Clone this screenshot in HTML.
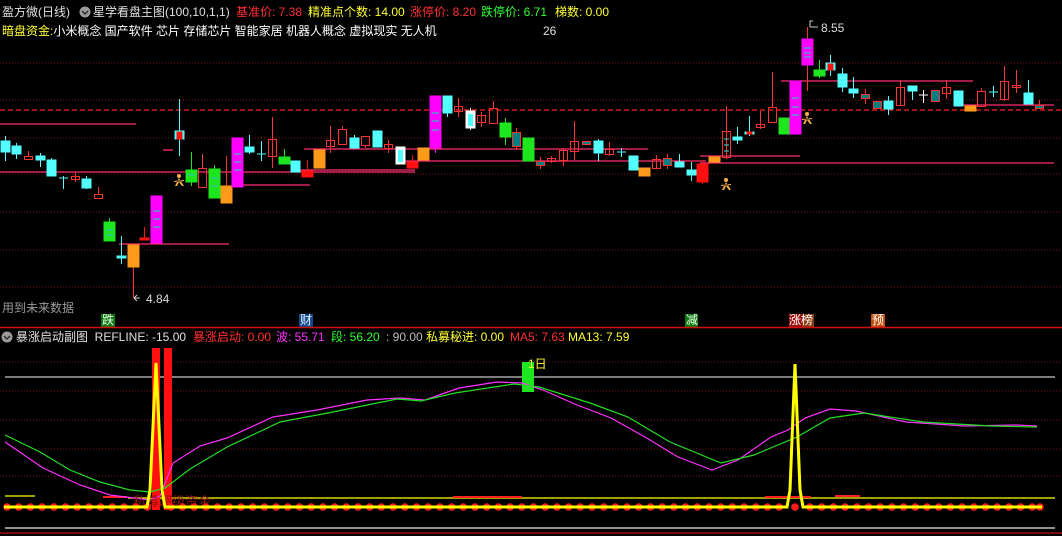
<!DOCTYPE html>
<html><head><meta charset="utf-8"><style>
body{margin:0;background:#000;width:1062px;height:536px;overflow:hidden;font-family:"Liberation Sans","Noto Sans CJK SC",sans-serif;}
svg{position:absolute;left:0;top:0}
.t{position:absolute;font-size:12px;white-space:nowrap;line-height:14px}
</style></head><body>
<svg width="1062" height="536" xmlns="http://www.w3.org/2000/svg">
<g stroke="#7a1010" stroke-width="1" stroke-dasharray="1,2">
<line x1="0" y1="63" x2="1062" y2="63"/><line x1="0" y1="100" x2="1062" y2="100"/><line x1="0" y1="138" x2="1062" y2="138"/><line x1="0" y1="174" x2="1062" y2="174"/><line x1="0" y1="212" x2="1062" y2="212"/><line x1="0" y1="250" x2="1062" y2="250"/><line x1="0" y1="287" x2="1062" y2="287"/>
<line x1="0" y1="362" x2="1062" y2="362"/><line x1="0" y1="391" x2="1062" y2="391"/><line x1="0" y1="420" x2="1062" y2="420"/><line x1="0" y1="449" x2="1062" y2="449"/><line x1="0" y1="476" x2="1062" y2="476"/>
</g>
<line x1="0" y1="110" x2="1062" y2="110" stroke="#ff2020" stroke-width="1.3" stroke-dasharray="5,3"/>
<g stroke="#ff3070" stroke-width="1.3">
<line x1="0" y1="124" x2="136" y2="124"/><line x1="0" y1="172" x2="415" y2="172"/><line x1="119" y1="244" x2="229" y2="244"/><line x1="243" y1="185" x2="310" y2="185"/><line x1="304" y1="149" x2="648" y2="149"/><line x1="293" y1="170" x2="415" y2="170"/><line x1="398" y1="161" x2="706" y2="161"/><line x1="700" y1="163" x2="1054" y2="163"/><line x1="700" y1="156" x2="800" y2="156"/><line x1="781" y1="81" x2="973" y2="81"/><line x1="957" y1="105" x2="1054" y2="105"/><line x1="163" y1="150" x2="173" y2="150"/>
</g>
<g stroke-width="1">
<g fill="#54ffff" stroke="#54ffff">
<line x1="5.5" y1="136" x2="5.5" y2="161"/><rect x="1" y="141" width="9" height="11"/>
<line x1="16.5" y1="143" x2="16.5" y2="159"/><rect x="12" y="146" width="9" height="8"/>
<line x1="40.5" y1="153" x2="40.5" y2="167"/><rect x="36" y="156" width="9" height="4"/>
<line x1="51.5" y1="158" x2="51.5" y2="176"/><rect x="47" y="160" width="9" height="16"/>
<line x1="63.5" y1="176" x2="63.5" y2="189"/><line x1="59" y1="178" x2="68" y2="178"/>
<line x1="86.5" y1="176" x2="86.5" y2="189"/><rect x="82" y="179" width="9" height="9"/>
<line x1="121.5" y1="236" x2="121.5" y2="264"/><rect x="117" y="256" width="9" height="2"/>
<line x1="179.5" y1="99" x2="179.5" y2="156"/><rect x="175" y="131" width="9" height="8"/>
<line x1="249.5" y1="135" x2="249.5" y2="154"/><rect x="245" y="147" width="9" height="5"/>
<line x1="261.5" y1="141" x2="261.5" y2="161"/><line x1="257" y1="154" x2="266" y2="154"/>
<rect x="291" y="161" width="9" height="11"/>
<line x1="354.5" y1="135" x2="354.5" y2="148"/><rect x="350" y="138" width="9" height="10"/>
<rect x="373" y="131" width="9" height="16"/>
<rect x="443" y="96" width="9" height="17"/><line x1="447.5" y1="113" x2="447.5" y2="117"/>
<line x1="598.5" y1="139" x2="598.5" y2="161"/><rect x="594" y="141" width="9" height="12"/>
<line x1="621.5" y1="148" x2="621.5" y2="157"/><line x1="617" y1="152" x2="626" y2="152"/>
<rect x="629" y="156" width="9" height="14"/>
<line x1="679.5" y1="154" x2="679.5" y2="167"/><rect x="675" y="162" width="9" height="5"/>
<line x1="691.5" y1="162" x2="691.5" y2="181"/><rect x="687" y="170" width="9" height="5"/>
<line x1="737.5" y1="127" x2="737.5" y2="144"/><rect x="733" y="137" width="9" height="3"/>
<line x1="749.5" y1="116" x2="749.5" y2="136"/><rect x="745" y="132" width="9" height="2"/>
<line x1="830.5" y1="55" x2="830.5" y2="76"/><rect x="826" y="63" width="9" height="7"/>
<line x1="842.5" y1="68" x2="842.5" y2="92"/><rect x="838" y="74" width="9" height="13"/>
<line x1="853.5" y1="77" x2="853.5" y2="98"/><rect x="849" y="89" width="9" height="4"/>
<line x1="888.5" y1="96" x2="888.5" y2="115"/><rect x="884" y="101" width="9" height="8"/>
<line x1="912.5" y1="86" x2="912.5" y2="100"/><rect x="908" y="86" width="9" height="5"/>
<rect x="954" y="91" width="9" height="15"/>
<line x1="993.5" y1="86" x2="993.5" y2="97"/><line x1="989" y1="92" x2="998" y2="92"/>
<line x1="1028.5" y1="80" x2="1028.5" y2="93"/><rect x="1024" y="93" width="9" height="11"/>
</g>
<g fill="#fff" stroke="#fff"><rect x="396" y="147" width="9" height="17"/><rect x="466" y="111" width="9" height="17"/><line x1="470.5" y1="108" x2="470.5" y2="130"/><line x1="923.5" y1="90" x2="923.5" y2="103"/><line x1="919" y1="95" x2="928" y2="95"/></g>
<g fill="#54ffff"><rect x="398" y="150" width="5" height="12"/><rect x="468" y="114" width="5" height="12"/></g>
<g fill="none" stroke="#ff3232">
<line x1="28.5" y1="151" x2="28.5" y2="156"/><rect x="24.5" y="156.5" width="8" height="3"/>
<line x1="75.5" y1="172" x2="75.5" y2="182"/><rect x="71.5" y="176.5" width="8" height="3"/>
<line x1="98.5" y1="187" x2="98.5" y2="194"/><rect x="94.5" y="194.5" width="8" height="4"/>
<line x1="202.5" y1="154" x2="202.5" y2="168"/><rect x="198.5" y="168.5" width="8" height="19"/>
<line x1="272.5" y1="117" x2="272.5" y2="168"/><rect x="268.5" y="139.5" width="8" height="17"/>
<line x1="330.5" y1="126" x2="330.5" y2="153"/><rect x="326.5" y="140.5" width="8" height="6"/>
<line x1="342.5" y1="126" x2="342.5" y2="129"/><rect x="338.5" y="129.5" width="8" height="15"/>
<rect x="361.5" y="136.5" width="8" height="9"/><line x1="365.5" y1="146" x2="365.5" y2="148"/>
<line x1="388.5" y1="140" x2="388.5" y2="153"/><rect x="384.5" y="144.5" width="8" height="4"/>
<line x1="458.5" y1="98" x2="458.5" y2="117"/><rect x="454.5" y="106.5" width="8" height="5"/>
<line x1="481.5" y1="112" x2="481.5" y2="127"/><rect x="477.5" y="115.5" width="8" height="7"/>
<line x1="493.5" y1="101" x2="493.5" y2="108"/><rect x="489.5" y="108.5" width="8" height="15"/>
<line x1="551.5" y1="156" x2="551.5" y2="163"/><rect x="547.5" y="158.5" width="8" height="3"/>
<line x1="563.5" y1="148" x2="563.5" y2="166"/><rect x="559.5" y="150.5" width="8" height="10"/>
<line x1="574.5" y1="121" x2="574.5" y2="160"/><rect x="570.5" y="141.5" width="8" height="10"/>
<line x1="609.5" y1="142" x2="609.5" y2="156"/><rect x="605.5" y="149.5" width="8" height="5"/>
<line x1="656.5" y1="155" x2="656.5" y2="168"/><rect x="652.5" y="159.5" width="8" height="9"/>
<line x1="726.5" y1="106" x2="726.5" y2="159"/><rect x="722.5" y="131.5" width="8" height="26"/>
<line x1="760.5" y1="111" x2="760.5" y2="129"/><rect x="756.5" y="124.5" width="8" height="3"/>
<line x1="772.5" y1="72" x2="772.5" y2="107"/><rect x="768.5" y="107.5" width="8" height="15"/>
<line x1="900.5" y1="80" x2="900.5" y2="106"/><rect x="896.5" y="87.5" width="8" height="18"/>
<line x1="946.5" y1="80" x2="946.5" y2="99"/><rect x="942.5" y="87.5" width="8" height="6"/>
<line x1="981.5" y1="88" x2="981.5" y2="91"/><rect x="977.5" y="91.5" width="8" height="15"/>
<line x1="1004.5" y1="66" x2="1004.5" y2="101"/><rect x="1000.5" y="81.5" width="8" height="18"/>
<line x1="1016.5" y1="70" x2="1016.5" y2="93"/><rect x="1012.5" y="85.5" width="8" height="2"/>
</g>
<g fill="#008080" stroke="#ff3232">
<line x1="516.5" y1="128" x2="516.5" y2="150"/><rect x="512.5" y="132.5" width="8" height="14"/>
<line x1="540.5" y1="157" x2="540.5" y2="169"/><rect x="536.5" y="161.5" width="8" height="4"/>
<rect x="582.5" y="141.5" width="8" height="3"/>
<line x1="667.5" y1="154" x2="667.5" y2="169"/><rect x="663.5" y="158.5" width="8" height="7"/>
<line x1="865.5" y1="89" x2="865.5" y2="104"/><rect x="861.5" y="94.5" width="8" height="4"/>
<rect x="873.5" y="101.5" width="8" height="7"/>
<rect x="931.5" y="90.5" width="8" height="11"/>
<line x1="1039.5" y1="100" x2="1039.5" y2="108"/><rect x="1035.5" y="105.5" width="8" height="3"/>
</g>
<g fill="#ff1010" stroke="#ff1010">
<line x1="144.5" y1="227" x2="144.5" y2="240"/><rect x="140" y="238" width="9" height="2"/>
<line x1="307.5" y1="160" x2="307.5" y2="177"/><rect x="302" y="171" width="11" height="6"/>
<line x1="412.5" y1="155" x2="412.5" y2="168"/><rect x="407" y="162" width="11" height="6"/>
<line x1="702.5" y1="160" x2="702.5" y2="184"/><rect x="697" y="164" width="11" height="18"/>
<rect x="177" y="132" width="5" height="7"/><rect x="828" y="64" width="5" height="6"/><rect x="747" y="132" width="5" height="2"/>
</g>
<g fill="#1ee61e" stroke="#1ee61e">
<line x1="109.5" y1="218" x2="109.5" y2="222"/><rect x="104" y="222" width="11" height="19"/>
<line x1="191.5" y1="152" x2="191.5" y2="186"/><rect x="186" y="170" width="11" height="12"/>
<line x1="214.5" y1="165" x2="214.5" y2="169"/><rect x="209" y="169" width="11" height="29"/>
<line x1="284.5" y1="149" x2="284.5" y2="157"/><rect x="279" y="157" width="11" height="7"/>
<line x1="505.5" y1="118" x2="505.5" y2="145"/><rect x="500" y="123" width="11" height="14"/>
<rect x="523" y="138" width="11" height="23"/>
<rect x="779" y="118" width="11" height="16"/>
<line x1="819.5" y1="60" x2="819.5" y2="78"/><rect x="814" y="70" width="11" height="6"/>
</g>
<g fill="#ff9a1a" stroke="#ff9a1a">
<line x1="133.5" y1="267" x2="133.5" y2="298" stroke="#ff3232"/><rect x="128" y="245" width="11" height="22"/>
<line x1="226.5" y1="156" x2="226.5" y2="186" stroke="#ff3232"/><rect x="221" y="186" width="11" height="17"/>
<rect x="314" y="150" width="11" height="18"/>
<rect x="418" y="148" width="11" height="12"/>
<rect x="639" y="168" width="11" height="8"/>
<rect x="709" y="157" width="11" height="5"/>
<rect x="965" y="106" width="11" height="5"/>
</g>
<g fill="#ff00ff" stroke="#ff00ff">
<rect x="151" y="196" width="11" height="47"/><rect x="232" y="138" width="11" height="49"/><rect x="430" y="96" width="11" height="52"/><line x1="435.5" y1="148" x2="435.5" y2="153"/><rect x="790" y="81" width="11" height="53"/><line x1="807.5" y1="27" x2="807.5" y2="91" stroke="#ff3232"/><rect x="802" y="39" width="11" height="26"/>
</g>
<g stroke="#30c0c0" stroke-width="1.2">
<line x1="153" y1="211" x2="160" y2="211"/><line x1="153" y1="219" x2="160" y2="219"/><line x1="153" y1="227" x2="160" y2="227"/>
<line x1="234" y1="154" x2="241" y2="154"/><line x1="234" y1="162" x2="241" y2="162"/><line x1="234" y1="170" x2="241" y2="170"/>
<line x1="432" y1="113" x2="439" y2="113"/><line x1="432" y1="121" x2="439" y2="121"/><line x1="432" y1="130" x2="439" y2="130"/>
<line x1="792" y1="98" x2="799" y2="98"/><line x1="792" y1="107" x2="799" y2="107"/><line x1="792" y1="115" x2="799" y2="115"/>
<line x1="804" y1="48" x2="811" y2="48"/><line x1="804" y1="53" x2="811" y2="53"/><line x1="804" y1="57" x2="811" y2="57"/>
<line x1="724" y1="139" x2="729" y2="139"/><line x1="724" y1="145" x2="729" y2="145"/><line x1="724" y1="151" x2="729" y2="151"/>
<line x1="106" y1="230" x2="113" y2="230"/><line x1="106" y1="235" x2="113" y2="235"/>
<line x1="188" y1="175" x2="195" y2="175"/><line x1="211" y1="178" x2="218" y2="178"/><line x1="211" y1="186" x2="218" y2="186"/>
</g>
</g>
<polyline points="134,298 140,298" stroke="#ccc" fill="none"/><path d="M137,295 L134,298 L137,301" stroke="#ccc" fill="none"/>
<path d="M810,27 L810,21 L813,21 M810,27 L818,27" stroke="#ccc" fill="none"/>
<g fill="#f5b04a">
<circle cx="179" cy="176" r="2"/><path d="M179,178 L175,186 L177,186 L179,182 L182,186 L184,186 Z M174,181 L184,180 L184,181 L174,182 Z"/>
<circle cx="726" cy="180" r="2"/><path d="M726,182 L722,190 L724,190 L726,186 L729,190 L731,190 Z M721,185 L731,184 L731,185 L721,186 Z"/>
<circle cx="807" cy="114" r="2"/><path d="M807,116 L803,124 L805,124 L807,120 L810,124 L812,124 Z M802,119 L812,118 L812,119 L802,120 Z"/>
</g>
<rect x="101" y="314" width="14" height="13" fill="#137a13"/><rect x="299" y="314" width="14" height="13" fill="#124a8a"/><rect x="685" y="314" width="13" height="13" fill="#137a13"/><rect x="789" y="314" width="13" height="13" fill="#a01010"/><rect x="802" y="314" width="12" height="13" fill="#8a3a10"/><rect x="871" y="314" width="14" height="13" fill="#c05010"/>
<line x1="0" y1="327.5" x2="1062" y2="327.5" stroke="#d01010" stroke-width="1.5"/>
<line x1="5" y1="377" x2="1055" y2="377" stroke="#c8c8c8" stroke-width="1.2"/>
<line x1="5" y1="496" x2="35" y2="496" stroke="#ffff00" stroke-width="1.3"/>
<line x1="128" y1="498" x2="1055" y2="498" stroke="#ffff00" stroke-width="1.3"/>
<g stroke="#ff2020" stroke-width="2"><line x1="103" y1="497" x2="127" y2="497"/><line x1="453" y1="497" x2="522" y2="497"/><line x1="765" y1="497" x2="811" y2="497"/><line x1="835" y1="496" x2="860" y2="496"/></g>
<rect x="152" y="348" width="8" height="162" fill="#ff1010"/><rect x="164" y="348" width="8" height="162" fill="#ff1010"/>
<rect x="522" y="362" width="12" height="30" fill="#1ee61e"/>
<polyline fill="none" stroke="#ff30ff" stroke-width="1.2" points="5,442 43,468 80,485 110,495 150,500 160,496 173,463 200,446 227,438 273,417 317,410 367,400 400,398 425,400 459,388 497,382 522,383 543,390 577,405 611,418 645,437 678,457 712,470 738,460 771,437 788,430 805,418 830,409 856,411 906,422 965,426 1016,425 1037,426"/>
<polyline fill="none" stroke="#20e020" stroke-width="1.2" points="5,435 40,452 70,470 100,482 130,490 150,492 165,488 190,469 227,447 280,422 333,412 397,399 421,401 455,393 514,384 539,387 590,403 628,417 670,442 721,463 754,455 797,437 830,418 864,413 923,422 991,426 1037,427"/>
<text x="133" y="506" font-size="13" fill="#901010" font-family="Liberation Sans,Noto Sans CJK SC,sans-serif">私募超级资金:</text>
<g fill="#ff1a1a">
<circle cx="7" cy="507" r="3.8"/><circle cx="18.7" cy="507" r="3.8"/><circle cx="30.4" cy="507" r="3.8"/><circle cx="42.1" cy="507" r="3.8"/><circle cx="53.8" cy="507" r="3.8"/><circle cx="65.5" cy="507" r="3.8"/><circle cx="77.2" cy="507" r="3.8"/><circle cx="88.9" cy="507" r="3.8"/><circle cx="100.6" cy="507" r="3.8"/><circle cx="112.3" cy="507" r="3.8"/><circle cx="124" cy="507" r="3.8"/><circle cx="135.7" cy="507" r="3.8"/><circle cx="147.4" cy="507" r="3.8"/><circle cx="170.8" cy="507" r="3.8"/><circle cx="182.5" cy="507" r="3.8"/><circle cx="194.2" cy="507" r="3.8"/><circle cx="205.9" cy="507" r="3.8"/><circle cx="217.6" cy="507" r="3.8"/><circle cx="229.3" cy="507" r="3.8"/><circle cx="241" cy="507" r="3.8"/><circle cx="252.7" cy="507" r="3.8"/><circle cx="264.4" cy="507" r="3.8"/><circle cx="276.1" cy="507" r="3.8"/><circle cx="287.8" cy="507" r="3.8"/><circle cx="299.5" cy="507" r="3.8"/><circle cx="311.2" cy="507" r="3.8"/><circle cx="322.9" cy="507" r="3.8"/><circle cx="334.6" cy="507" r="3.8"/><circle cx="346.3" cy="507" r="3.8"/><circle cx="358" cy="507" r="3.8"/><circle cx="369.7" cy="507" r="3.8"/><circle cx="381.4" cy="507" r="3.8"/><circle cx="393.1" cy="507" r="3.8"/><circle cx="404.8" cy="507" r="3.8"/><circle cx="416.5" cy="507" r="3.8"/><circle cx="428.2" cy="507" r="3.8"/><circle cx="439.9" cy="507" r="3.8"/><circle cx="451.6" cy="507" r="3.8"/><circle cx="463.3" cy="507" r="3.8"/><circle cx="475" cy="507" r="3.8"/><circle cx="486.7" cy="507" r="3.8"/><circle cx="498.4" cy="507" r="3.8"/><circle cx="510.1" cy="507" r="3.8"/><circle cx="521.8" cy="507" r="3.8"/><circle cx="533.5" cy="507" r="3.8"/><circle cx="545.2" cy="507" r="3.8"/><circle cx="556.9" cy="507" r="3.8"/><circle cx="568.6" cy="507" r="3.8"/><circle cx="580.3" cy="507" r="3.8"/><circle cx="592" cy="507" r="3.8"/><circle cx="603.7" cy="507" r="3.8"/><circle cx="615.4" cy="507" r="3.8"/><circle cx="627.1" cy="507" r="3.8"/><circle cx="638.8" cy="507" r="3.8"/><circle cx="650.5" cy="507" r="3.8"/><circle cx="662.2" cy="507" r="3.8"/><circle cx="673.9" cy="507" r="3.8"/><circle cx="685.6" cy="507" r="3.8"/><circle cx="697.3" cy="507" r="3.8"/><circle cx="709" cy="507" r="3.8"/><circle cx="720.7" cy="507" r="3.8"/><circle cx="732.4" cy="507" r="3.8"/><circle cx="744.1" cy="507" r="3.8"/><circle cx="755.8" cy="507" r="3.8"/><circle cx="767.5" cy="507" r="3.8"/><circle cx="779.2" cy="507" r="3.8"/><circle cx="795" cy="507" r="3.8"/><circle cx="810" cy="507" r="3.8"/><circle cx="821.7" cy="507" r="3.8"/><circle cx="833.4" cy="507" r="3.8"/><circle cx="845.1" cy="507" r="3.8"/><circle cx="856.8" cy="507" r="3.8"/><circle cx="868.5" cy="507" r="3.8"/><circle cx="880.2" cy="507" r="3.8"/><circle cx="891.9" cy="507" r="3.8"/><circle cx="903.6" cy="507" r="3.8"/><circle cx="915.3" cy="507" r="3.8"/><circle cx="927" cy="507" r="3.8"/><circle cx="938.7" cy="507" r="3.8"/><circle cx="950.4" cy="507" r="3.8"/><circle cx="962.1" cy="507" r="3.8"/><circle cx="973.8" cy="507" r="3.8"/><circle cx="985.5" cy="507" r="3.8"/><circle cx="997.2" cy="507" r="3.8"/><circle cx="1008.9" cy="507" r="3.8"/><circle cx="1020.6" cy="507" r="3.8"/><circle cx="1032.3" cy="507" r="3.8"/><circle cx="1040" cy="507" r="3.8"/>
</g>
<polyline fill="none" stroke="#ffff00" stroke-width="3" points="4,507 147,507 150,490 156,363 162,490 165,507 787,507 790,490 795,364 800,490 803,507 1042,507"/>
<line x1="5" y1="528" x2="1055" y2="528" stroke="#e8e8e8" stroke-width="1.3"/>
<line x1="0" y1="533" x2="1062" y2="533" stroke="#c01010" stroke-width="1.3"/>
<circle cx="85" cy="12" r="5.5" fill="#9a9a9a"/><path d="M82,11 L85,14 L88,11" stroke="#222" stroke-width="1.3" fill="none"/>
<circle cx="7" cy="337" r="5.5" fill="#9a9a9a"/><path d="M4,336 L7,339 L10,336" stroke="#222" stroke-width="1.3" fill="none"/>
</svg>
<div class="t" style="left:2px;top:5px;color:#e0e0e0">盈方微(日线)</div>
<div class="t" style="left:93px;top:5px;color:#e0e0e0">星学看盘主图(100,10,1,1)</div>
<div class="t" style="left:236px;top:5px;color:#ff3030">基准价: 7.38</div>
<div class="t" style="left:308px;top:5px;color:#ffff30">精准点个数: 14.00</div>
<div class="t" style="left:410px;top:5px;color:#ff3030">涨停价: 8.20</div>
<div class="t" style="left:481px;top:5px;color:#30ff30">跌停价: 6.71</div>
<div class="t" style="left:555px;top:5px;color:#ffff30">梯数: 0.00</div>
<div class="t" style="left:2px;top:24px;color:#ffff30">暗盘资金:<span style="color:#fff">小米概念 国产软件 芯片 存储芯片 智能家居 机器人概念 虚拟现实 无人机</span></div>
<div class="t" style="left:543px;top:24px;color:#e0e0e0">26</div>
<div class="t" style="left:821px;top:21px;color:#ddd">8.55</div>
<div class="t" style="left:146px;top:292px;color:#ddd">4.84</div>
<div class="t" style="left:2px;top:301px;color:#9a9a9a">用到未来数据</div>
<div class="t" style="left:102px;top:313px;color:#e8ffe8;font-size:12px">跌</div>
<div class="t" style="left:300px;top:313px;color:#e8f0ff;font-size:12px">财</div>
<div class="t" style="left:686px;top:313px;color:#e8ffe8;font-size:12px">减</div>
<div class="t" style="left:789px;top:313px;color:#fff;font-size:12px">涨榜</div>
<div class="t" style="left:872px;top:313px;color:#fff;font-size:12px">预</div>
<div class="t" style="left:16px;top:330px;color:#e0e0e0">暴涨启动副图 &nbsp;REFLINE: -15.00</div>
<div class="t" style="left:193px;top:330px;color:#ff3030">暴涨启动: 0.00</div>
<div class="t" style="left:276px;top:330px;color:#ff30ff">波: 55.71</div>
<div class="t" style="left:331px;top:330px;color:#30ff30">段: 56.20</div>
<div class="t" style="left:386px;top:330px;color:#bbb">: 90.00</div>
<div class="t" style="left:426px;top:330px;color:#ffff30">私募秘进: 0.00</div>
<div class="t" style="left:510px;top:330px;color:#ff3030">MA5: 7.63</div>
<div class="t" style="left:568px;top:330px;color:#ffff30">MA13: 7.59</div>
<div class="t" style="left:528px;top:357px;color:#ffff30">1日</div>
</body></html>
